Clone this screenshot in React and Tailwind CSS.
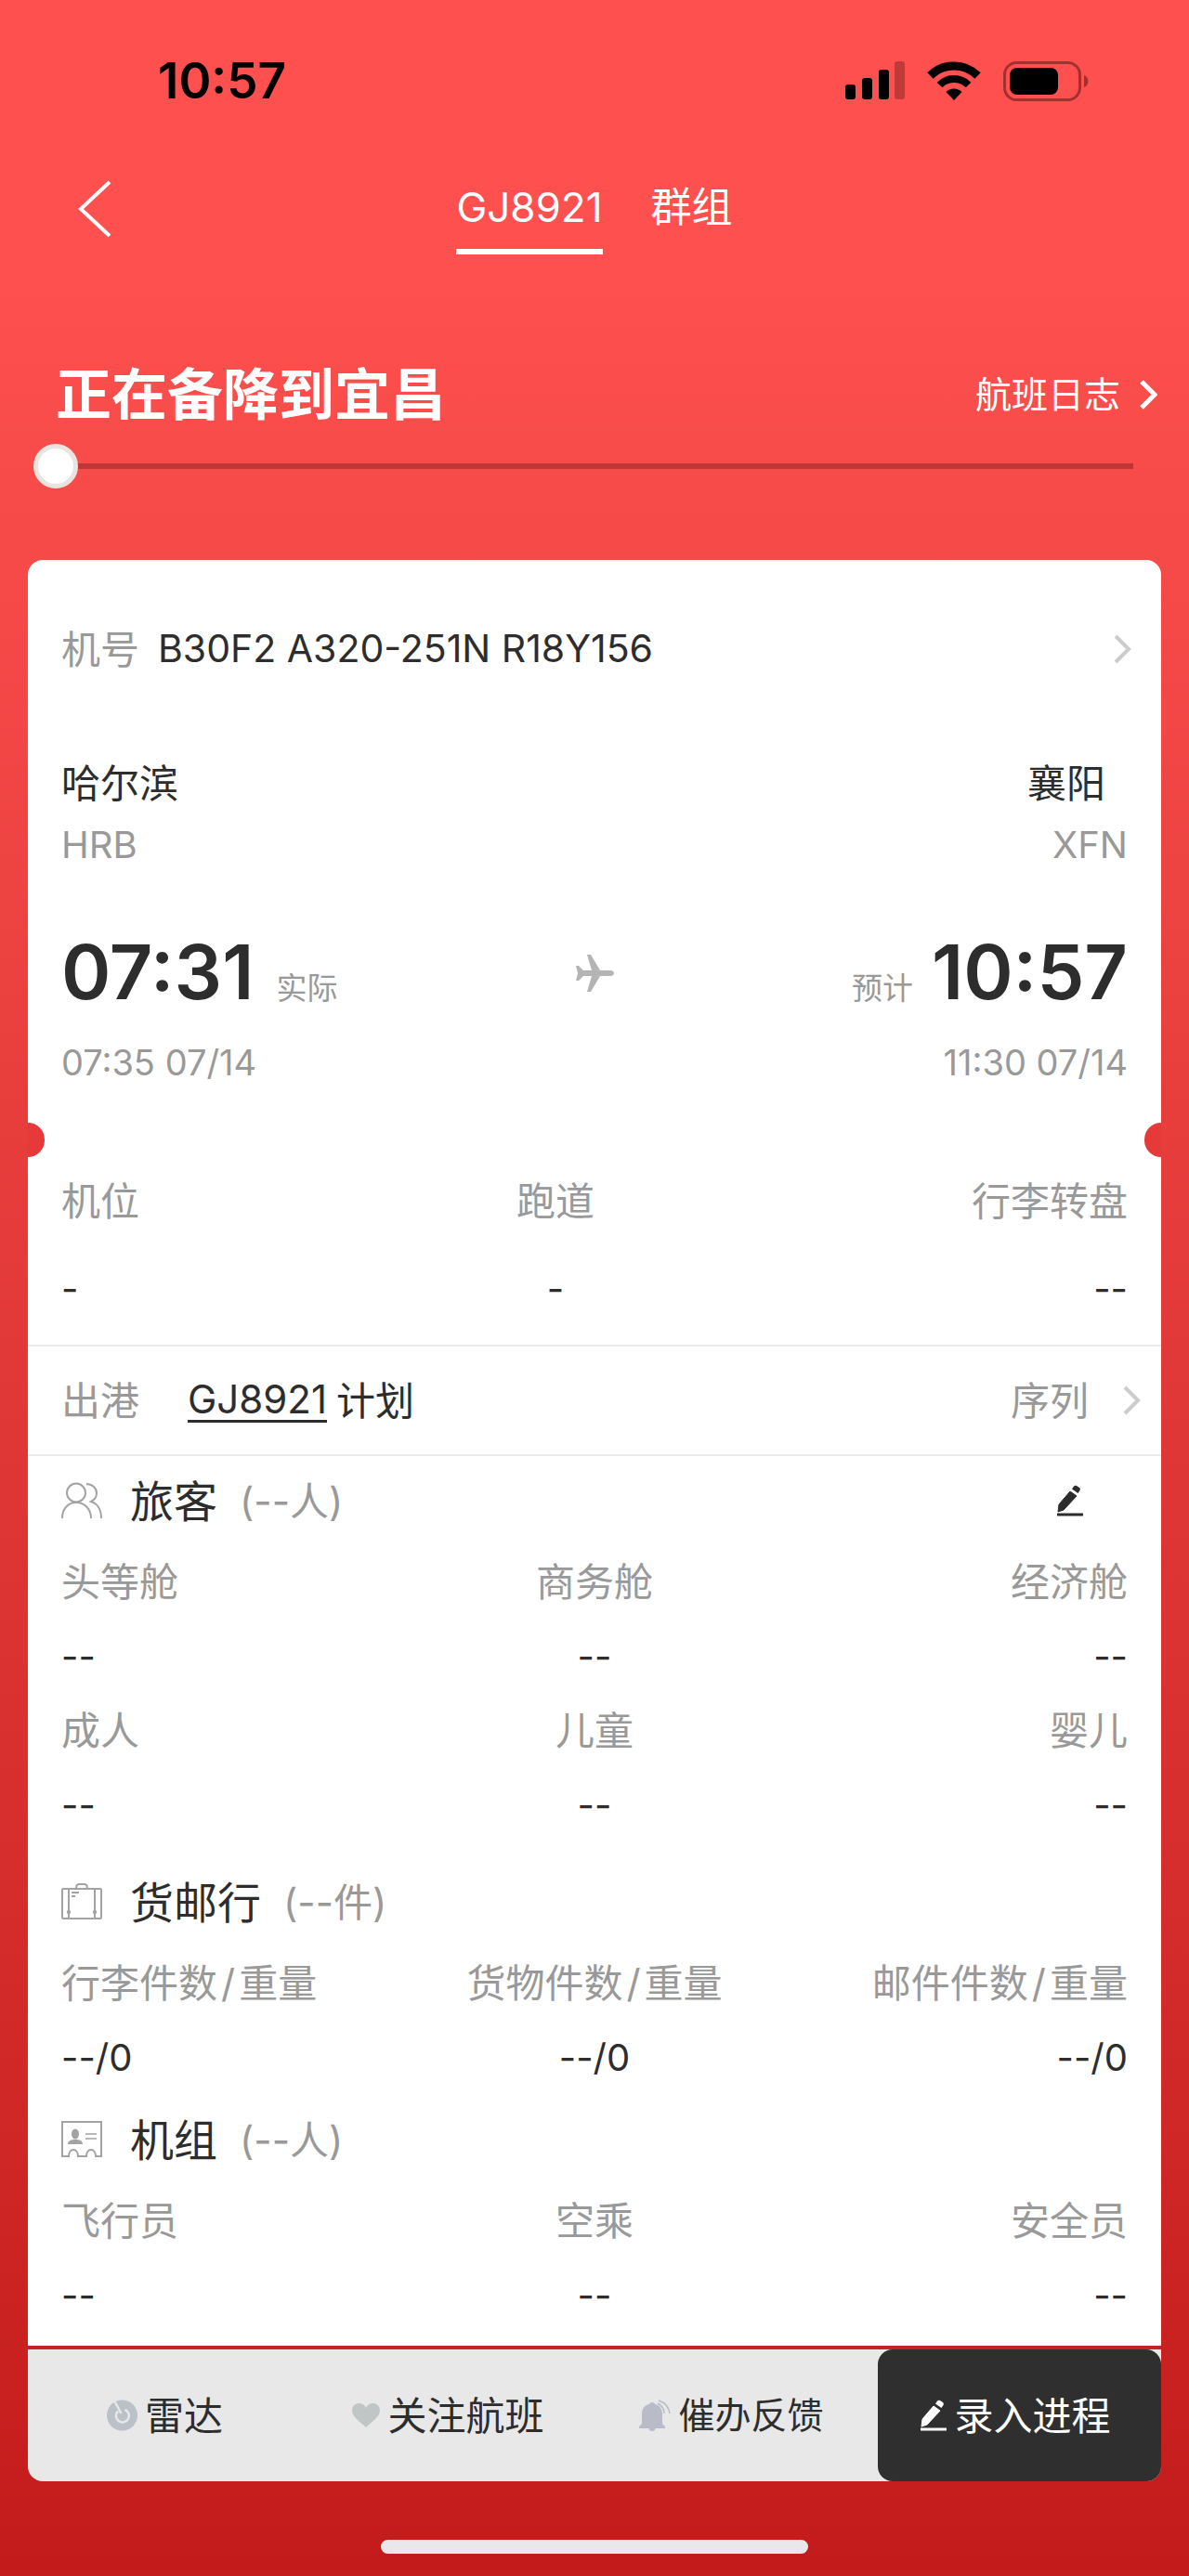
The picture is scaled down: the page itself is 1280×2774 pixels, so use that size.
import { useState } from 'react';

const passengerRows = [
  [
    { label: '头等舱', value: '--' },
    { label: '商务舱', value: '--' },
    { label: '经济舱', value: '--' },
  ],
  [
    { label: '成人', value: '--' },
    { label: '儿童', value: '--' },
    { label: '婴儿', value: '--' },
  ],
];

const cargoRows = [
  [
    { label: '行李件数', unit: '重量', value: '--/0' },
    { label: '货物件数', unit: '重量', value: '--/0' },
    { label: '邮件件数', unit: '重量', value: '--/0' },
  ],
];

const crewRows = [
  [
    { label: '飞行员', value: '--' },
    { label: '空乘', value: '--' },
    { label: '安全员', value: '--' },
  ],
];

const groundInfo = [
  { label: '机位', value: '-' },
  { label: '跑道', value: '-' },
  { label: '行李转盘', value: '--' },
];

const columnAlign = ['text-left', 'text-center', 'text-right'];

function SignalIcon() {
  return (
    <svg className="w-16 h-[42px]" viewBox="0 0 64 42" fill="#000">
      <rect x="0" y="25" width="11" height="16" rx="3" />
      <rect x="18" y="18" width="11" height="23" rx="3" />
      <rect x="36" y="9" width="11" height="32" rx="3" />
      <rect x="53" y="0" width="11" height="41" rx="3" opacity="0.25" />
    </svg>
  );
}

function WifiIcon() {
  return (
    <svg className="w-[58px] h-[42px]" viewBox="0 0 58 42" fill="none" stroke="#000">
      <path d="M3.5 15.5a36 36 0 0 1 51 0" strokeWidth="9" />
      <path d="M13.5 25.5a22 22 0 0 1 31 0" strokeWidth="8" />
      <path d="M29 42l-8.500-9a12 12 0 0 1 17 0z" fill="#000" stroke="none" />
    </svg>
  );
}

function BatteryIcon() {
  return (
    <svg className="w-[92px] h-[43px]" viewBox="0 0 92 43">
      <rect x="1.500" y="1.500" width="81" height="40" rx="13" fill="none" stroke="#a52f30" strokeWidth="3" />
      <rect x="7" y="7" width="52" height="29" rx="8" fill="#000" />
      <path d="M87 15a7 7 0 0 1 0 13z" fill="#a52f30" />
    </svg>
  );
}

function ChevronIcon({ className, strokeWidth = 4 }) {
  return (
    <svg className={className} viewBox="0 0 20 32" fill="none" stroke="currentColor" strokeWidth={strokeWidth}>
      <path d="M3 2l14 14L3 30" />
    </svg>
  );
}

function PlaneIcon() {
  return (
    <svg className="w-[42px] h-10 text-[#b4b4b4]" viewBox="0 0 42 40" fill="currentColor">
      <path d="M42 20c0-2-2-3-4-3H27L17 0h-4l5 17H9L4 12H1l2 8-2 8h3l5-5h9l-5 17h4l10-17h11c2 0 4-1 4-3z" />
    </svg>
  );
}

function PencilIcon({ className }) {
  return (
    <svg className={className} viewBox="0 0 28 34" fill="currentColor">
      <path d="M14 7l7 5L7 27l-6 2 1-8z" stroke="currentColor" strokeWidth="1" strokeLinejoin="round" />
      <path d="M16 4.500l2-3c1-1 2-1 3-.500l3 2c1 1 1 2 .500 3l-2 3z" />
      <path d="M0 30.500h28v3H0z" />
    </svg>
  );
}

function PassengersIcon() {
  return (
    <svg className="w-11 h-10" viewBox="0 0 44 40" fill="none" stroke="#a3a3a3" strokeWidth="2">
      <circle cx="16" cy="11.500" r="10" />
      <path d="M1 39c0-10 6-17 15-17s16 7 16 17" />
      <path d="M27 2c6 0 11 4 11 10 0 4-2 7-6 9 7 2 11 9 11 18" />
    </svg>
  );
}

function LuggageIcon() {
  return (
    <svg className="w-11 h-10" viewBox="0 0 44 40" fill="none" stroke="#a3a3a3" strokeWidth="2">
      <rect x="1" y="6" width="42" height="32" rx="1" />
      <path d="M16 6c0-3 1-5 3-5h6c2 0 3 2 3 5" />
      <path d="M8 6v32M36 6v32" />
      <path d="M11 10h8M11 14h4" />
      <path d="M6 31h4M34 31h4" strokeWidth="3" />
    </svg>
  );
}

function CrewIcon() {
  return (
    <svg className="w-11 h-10" viewBox="0 0 44 40" fill="none" stroke="#a3a3a3" strokeWidth="2">
      <path d="M1 1h42v37h-6c0-4-2-7-5-7s-5 3-5 7h-9c0-4-2-7-5-7s-5 3-5 7H1z" />
      <ellipse cx="15" cy="14" rx="4" ry="5.500" fill="#a3a3a3" stroke="none" />
      <path d="M7 25c0-4 4-5 8-5s8 1 8 5z" fill="#a3a3a3" stroke="none" />
      <path d="M26 14h12M26 19h12" strokeWidth="1.500" />
    </svg>
  );
}

function RadarIcon() {
  return (
    <svg className="w-[33px] h-[34px]" viewBox="0 0 33 34" fill="none">
      <circle cx="16.500" cy="17" r="16.500" fill="#bbc1c9" />
      <circle cx="16.500" cy="18" r="3.500" fill="#bbc1c9" />
      <path d="M12 12.500a7 7 0 1 0 7.500-1.500" stroke="#e8e8e8" strokeWidth="2.500" />
      <path d="M8.500 2l7 13" stroke="#e8e8e8" strokeWidth="2.500" />
    </svg>
  );
}

function HeartIcon() {
  return (
    <svg className="w-[30px] h-[26px]" viewBox="0 0 30 26" fill="#bfc6c5">
      <path d="M15 26C9 20 0 15 0 7.500 0 3 3.500 0 7.500 0 11 0 14 2 15 5c1-3 4-5 7.500-5C26.500 0 30 3 30 7.500 30 15 21 20 15 26z" />
    </svg>
  );
}

function BellIcon() {
  return (
    <svg className="w-[34px] h-[34px]" viewBox="0 0 34 34" fill="#b9bbc8">
      <path d="M14 3c2 0 3 1 3 2 5 1 8 5 8 10v11l3 3v2H0v-2l3-3V15C3 10 6 6 11 5c0-1 1-2 3-2z" />
      <path d="M10.500 31h7c0 2-1.500 3-3.500 3s-3.500-1-3.500-3z" />
      <path d="M20 4c4 2 7 6 7 11M21 1c6 2 11 7 12 14" fill="none" stroke="#b9bbc8" strokeWidth="1.500" />
    </svg>
  );
}

function StatusBar() {
  return (
    <div className="flex h-[174px] items-center justify-between pl-[170px] pr-[108px]">
      <span className="text-[53px] leading-none font-semibold text-black">10:57</span>
      <div className="flex items-center gap-6">
        <SignalIcon />
        <WifiIcon />
        <BatteryIcon />
      </div>
    </div>
  );
}

function SectionHeader({ icon, title, count, action }) {
  return (
    <div className="flex h-24 items-center">
      {icon}
      <h2 className="ml-[30px] text-[47px] leading-none">{title}</h2>
      <span className="ml-6 text-[#999]">({count})</span>
      {action}
    </div>
  );
}

function StatGrid({ rows }) {
  return rows.map((row) => (
    <dl key={row[0].label} className="grid grid-cols-3 leading-20">
      {row.map((item, i) => (
        <div key={item.label} className={columnAlign[i]}>
          <dt className="text-[#999]">
            {item.label}
            {item.unit && (
              <>
                <span className="mx-1">/</span>
                {item.unit}
              </>
            )}
          </dt>
          <dd className="text-[40px]">{item.value}</dd>
        </div>
      ))}
    </dl>
  ));
}

export default function App() {
  const [tab, setTab] = useState('flight');
  const [progress, setProgress] = useState(0);

  return (
    <div className="flex min-h-screen flex-col bg-linear-to-b from-[#fd504f] from-10% to-[#c31b1b] font-['Inter','Noto_Sans_CJK_SC',sans-serif] text-[42px] text-[#2d2d2d]">
      <StatusBar />

      <nav className="relative flex h-[100px] items-stretch justify-center gap-[52px] text-[44px] text-white">
        <button type="button" aria-label="返回" className="absolute top-5 left-[84px]">
          <svg className="h-[62px] w-9" viewBox="0 0 36 62" fill="none" stroke="currentColor" strokeWidth="4">
            <path d="M34 2L3 31l31 29" />
          </svg>
        </button>
        <button
          type="button"
          onClick={() => setTab('flight')}
          className={tab === 'flight' ? 'border-b-6 border-white pt-1' : 'border-b-6 border-transparent pt-1'}
        >
          GJ8921
        </button>
        <button
          type="button"
          onClick={() => setTab('group')}
          className={tab === 'group' ? 'border-b-6 border-white pt-1' : 'border-b-6 border-transparent pt-1'}
        >
          群组
        </button>
      </nav>

      <header className="mt-[111px] flex h-20 items-center justify-between pr-[34px] pl-[60px] text-white">
        <h1 className="text-[60px] leading-none font-bold">正在备降到宜昌</h1>
        <a href="#log" className="flex items-center gap-5 text-[39px]">
          航班日志
          <ChevronIcon className="h-8 w-5" strokeWidth={5} />
        </a>
      </header>

      <input
        type="range"
        aria-label="航班进度"
        min="0"
        max="100"
        value={progress}
        onChange={(e) => setProgress(Number(e.target.value))}
        className="mt-[13px] mr-[60px] ml-9 h-12 appearance-none bg-transparent [&::-webkit-slider-runnable-track]:h-1.5 [&::-webkit-slider-runnable-track]:bg-[#c03537] [&::-webkit-slider-thumb]:-mt-[21px] [&::-webkit-slider-thumb]:size-12 [&::-webkit-slider-thumb]:appearance-none [&::-webkit-slider-thumb]:rounded-full [&::-webkit-slider-thumb]:border-5 [&::-webkit-slider-thumb]:border-[#e8e4e0] [&::-webkit-slider-thumb]:bg-white"
      />

      <main className="mx-[30px] mt-[77px] rounded-t-2xl bg-white pb-3.5">
        <a href="#aircraft" className="flex h-48 items-center pr-8 pl-9">
          <span className="text-[#999]">机号</span>
          <span className="ml-5 text-[41px]">B30F2 A320-251N R18Y156</span>
          <ChevronIcon className="ml-auto h-8 w-5 text-[#ccc]" />
        </a>

        <section className="px-9 pt-4">
          <div className="flex justify-between leading-[66px]">
            <div>
              <p>哈尔滨</p>
              <p className="text-[40px] text-[#999]">HRB</p>
            </div>
            <div className="text-right">
              <p className="pr-6">襄阳</p>
              <p className="text-[40px] text-[#999]">XFN</p>
            </div>
          </div>

          <div className="mt-[55px] grid h-[100px] grid-cols-[1fr_auto_1fr] items-center">
            <div className="flex items-baseline gap-6">
              <span className="text-[81px] leading-none font-semibold">07:31</span>
              <span className="text-[33px] text-[#999]">实际</span>
            </div>
            <PlaneIcon />
            <div className="flex items-baseline justify-end gap-5">
              <span className="text-[33px] text-[#999]">预计</span>
              <span className="text-[81px] leading-none font-semibold">10:57</span>
            </div>
          </div>

          <div className="mt-4 flex justify-between text-[38px] leading-[60px] text-[#999]">
            <span>07:35 07/14</span>
            <span>11:30 07/14</span>
          </div>
        </section>

        {/* ticket notches */}
        <div className="mt-[35px] flex h-[37px] justify-between overflow-hidden">
          <span className="-ml-[18px] w-9 rounded-full bg-[#e63a3a]" />
          <span className="-mr-[18px] w-9 rounded-full bg-[#e63a3a]" />
        </div>

        <dl className="mt-[18px] flex justify-between px-9 pb-[30px] leading-[60px]">
          {groundInfo.map((item, i) => (
            <div key={item.label} className={columnAlign[i]}>
              <dt className="text-[#999]">{item.label}</dt>
              <dd className="mt-[34px] text-[40px]">{item.value}</dd>
            </div>
          ))}
        </dl>

        <div className="flex h-[120px] items-center border-y-2 border-[#ebebeb] pr-[22px] pl-9">
          <span className="text-[#999]">出港</span>
          <a href="#departure" className="ml-[52px] border-b-3 border-[#2d2d2d] leading-[44px]">
            GJ8921
          </a>
          <span className="ml-2.5">计划</span>
          <a href="#sequence" className="ml-auto flex items-center gap-9 text-[#999]">
            序列
            <ChevronIcon className="h-8 w-5 text-[#ccc]" />
          </a>
        </div>

        <section className="px-9 pb-4">
          <SectionHeader
            icon={<PassengersIcon />}
            title="旅客"
            count="--人"
            action={
              <button type="button" aria-label="编辑旅客" className="mr-12 ml-auto">
                <PencilIcon className="h-[34px] w-7" />
              </button>
            }
          />
          <StatGrid rows={passengerRows} />
        </section>

        <section className="px-9">
          <SectionHeader icon={<LuggageIcon />} title="货邮行" count="--件" />
          <StatGrid rows={cargoRows} />
        </section>

        <section className="px-9">
          <SectionHeader icon={<CrewIcon />} title="机组" count="--人" />
          <StatGrid rows={crewRows} />
        </section>
      </main>

      <div className="mx-[30px] mt-1 flex h-[142px] rounded-b-2xl bg-[#e8e8e8]">
        <button type="button" className="flex flex-1 items-center justify-center gap-2 pr-2.5">
          <RadarIcon />
          雷达
        </button>
        <button type="button" className="flex flex-1 items-center justify-center gap-2 pr-2.5">
          <HeartIcon />
          关注航班
        </button>
        <button type="button" className="flex flex-1 items-center justify-center gap-2 pr-2.5 text-[39px]">
          <BellIcon />
          催办反馈
        </button>
        <button type="button" className="flex w-1/4 items-center justify-center gap-2 rounded-2xl bg-[#2f2f2f] pr-2 text-white">
          <PencilIcon className="h-[34px] w-7" />
          录入进程
        </button>
      </div>

      <div className="mx-auto mt-[63px] mb-6 h-[15px] w-[460px] rounded-full bg-[#e9e7e9]" />
    </div>
  );
}
